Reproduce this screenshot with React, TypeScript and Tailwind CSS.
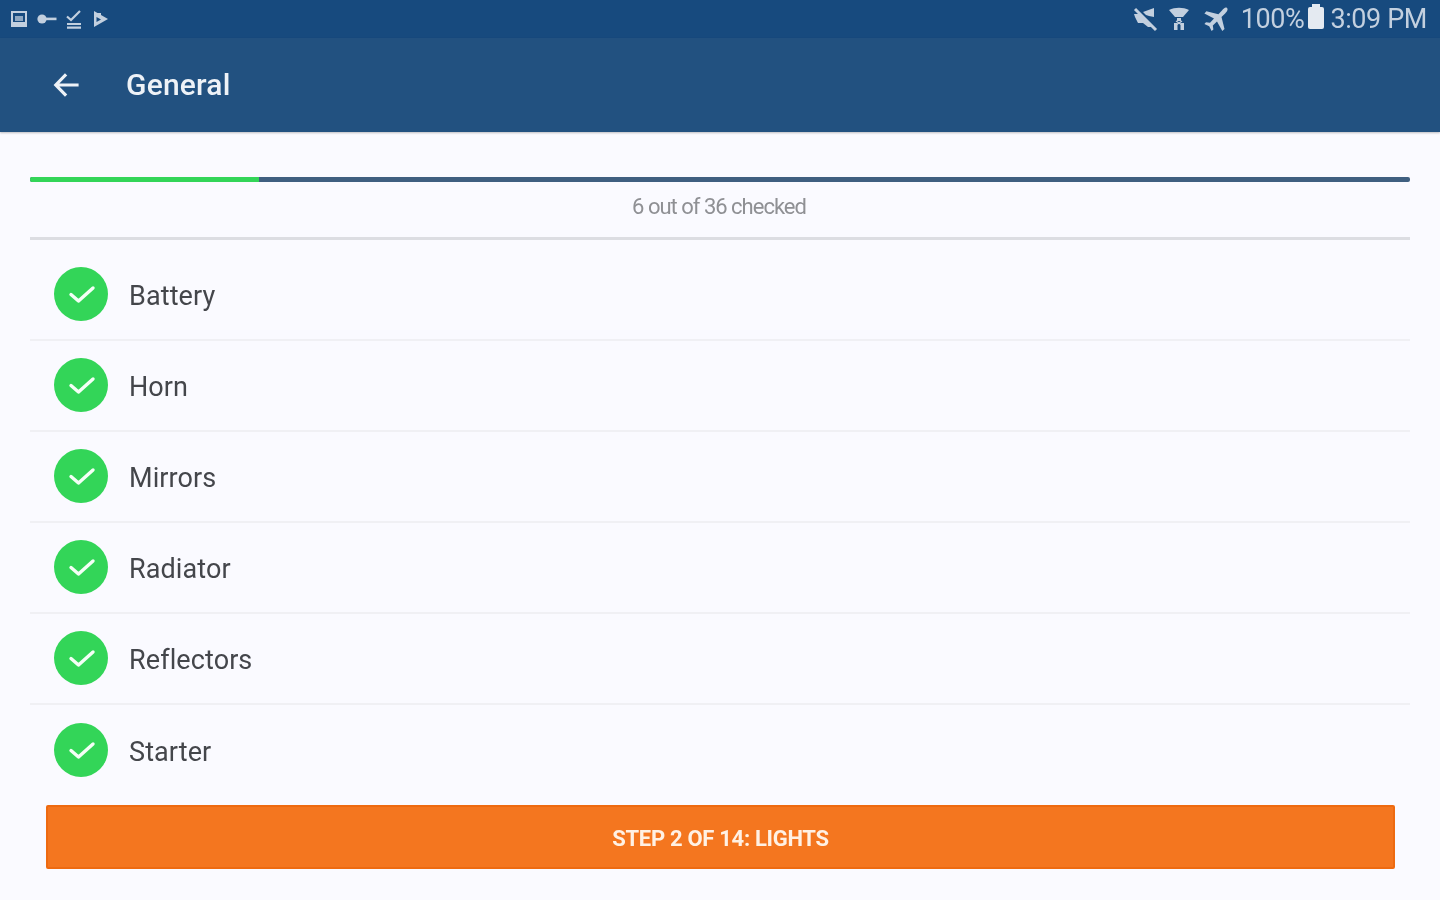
import React from "react";

const items = ["Battery", "Horn", "Mirrors", "Radiator", "Reflectors", "Starter"];

function Check() {
  return (
    <span className="flex h-[54px] w-[54px] shrink-0 items-center justify-center rounded-full bg-[#33d558]">
      <svg width="28" height="24" viewBox="0 0 28 24" fill="none" stroke="#f4fff6" strokeWidth="3.4" strokeLinecap="round" strokeLinejoin="round" className="ml-[2px]">
        <path d="M3 12.5 L10.5 19 L25 6" />
      </svg>
    </span>
  );
}

function LeftIcons() {
  return (
    <div className="flex items-center gap-[8px] text-[#c3d0df]">
      <svg width="20" height="20" viewBox="0 0 20 20" fill="currentColor">
        <path fillRule="evenodd" d="M2 2h16v16H2z M4 4v9h12V4z" />
        <path d="M6 7h8v5H6z" opacity="0.7" />
      </svg>
      <svg width="20" height="14" viewBox="0 0 20 14" fill="currentColor">
        <circle cx="5" cy="7" r="4.6" />
        <path d="M8 5.6h11.5v2.6H8z" />
      </svg>
      <svg width="18" height="20" viewBox="0 0 18 20" fill="none" stroke="currentColor" strokeWidth="2.2">
        <path d="M2 7.5 L6 11 L15 2" />
        <path d="M2 15h14M2 18.6h14" />
      </svg>
      <svg width="16" height="18" viewBox="0 0 16 18" fill="currentColor" className="ml-[2px]">
        <path fillRule="evenodd" d="M1 1 L15 9 L1 17z M3.500 7v5L8 9.500z" />
        <path d="M4 3h4v3H4z" />
      </svg>
    </div>
  );
}

function RightIcons() {
  return (
    <div className="flex items-center text-[#c3d0df]">
      <svg width="26" height="26" viewBox="0 0 26 26" fill="currentColor" className="mr-[9px]">
        <path d="M22 2v9l-5-1-3-1-3-3zM2 8h5l4 3 4 4 3 3 1 3-3 0-5-4H6L3 11z" />
        <path d="M3 3 L24 24" stroke="currentColor" strokeWidth="3" />
      </svg>
      <svg width="24" height="26" viewBox="0 0 24 26" fill="currentColor" className="mr-[12px]">
        <path d="M2 4c6-3 14-3 20 0l-6 7H8z" />
        <path d="M10 12h4v3h-4z" />
        <path d="M7 17h3.500v7H7zM13.500 17H17v7h-3.500z" />
        <path d="M9 15l6 4M15 15l-6 4" stroke="currentColor" strokeWidth="1.4" />
      </svg>
      <svg width="26" height="26" viewBox="0 0 26 26" fill="currentColor" className="mr-[12px]">
        <path d="M24 2c1.400 1.400 0 3.600-1.600 5.200L18.500 11l3 12-2.200 2-5.300-9.600-4.200 4 .6 4-1.800 1.600-2.400-4.800L1.400 18l1.600-1.800 4 .6 4-4.200L1.400 7.400l2-2.200 12 3 3.800-3.900C20.400 2.800 22.600.6 24 2z" />
      </svg>
      <span className="mt-[1px] text-[27px] leading-none tracking-[-0.4px] text-[#c3d0df]">100%</span>
      <span className="relative mb-[2px] ml-[4px] mr-[6px] h-[22px] w-[16px] rounded-[2px] bg-[#e4eaf1]">
        <span className="absolute left-[4px] top-[-3px] h-[3px] w-[8px] bg-[#e4eaf1]" />
      </span>
      <span className="mt-[1px] text-[27px] leading-none tracking-[-0.4px] text-[#c3d0df]">3:09 PM</span>
    </div>
  );
}

export default function App() {
  return (
    <div className="flex h-[900px] w-[1440px] flex-col overflow-hidden bg-[#fafaff] blur-[0.6px] [font-family:Roboto,sans-serif]">
      <div className="flex h-[38px] items-center justify-between bg-[#174a7e] pl-[9px] pr-[13px]">
        <LeftIcons />
        <RightIcons />
      </div>
      <header className="flex h-[94px] items-center bg-[#225180] pl-[52px] shadow-[0_1px_2px_rgba(0,0,0,0.25)]">
        <svg width="28" height="28" viewBox="0 0 28 28" fill="none" stroke="#eef2f7" strokeWidth="3.2" strokeLinecap="square" className="mr-[46px]">
          <path d="M25 14H5M13 4.500 L3.800 14 L13 23.500" />
        </svg>
        <h1 className="text-[30px] font-medium leading-none tracking-[0.2px] text-[#eef2f7]">General</h1>
      </header>

      <main className="flex flex-1 flex-col px-[30px] pt-[45px]">
        <div className="flex h-[5px] w-full overflow-hidden rounded-[2px] bg-[#3f5f80]">
          <div className="h-full w-[229px] bg-[#33d558]" />
        </div>
        <p className="flex h-[58px] items-center justify-center border-b-[3px] border-[#dcdde2] pb-[5px] pr-[2px] text-[22px] leading-none tracking-[-1px] text-[#8f9094]">
          6 out of 36 checked
        </p>
        <ul className="pt-[10px]">
          {items.map((item, i) => (
            <li
              key={item}
              className={
                i < 5
                  ? "flex h-[91px] items-center border-b-2 border-[#f0f0f4] pb-[2px] pl-[24px]"
                  : "flex h-[91px] items-center pb-[2px] pl-[24px]"
              }
            >
              <Check />
              <span className="ml-[21px] pt-[5px] text-[27px] leading-none tracking-[0.1px] text-[#44464b]">{item}</span>
            </li>
          ))}
        </ul>
        <button className="ml-[16px] mr-[15px] mt-[9px] flex h-[64px] items-center justify-center rounded-[2px] border-2 border-[#ee6a10] bg-[#f4761f] pt-[3px] text-[22px] font-bold leading-none tracking-[-0.3px] text-[#fff1e4]">
          STEP 2 OF 14: LIGHTS
        </button>
      </main>
    </div>
  );
}
